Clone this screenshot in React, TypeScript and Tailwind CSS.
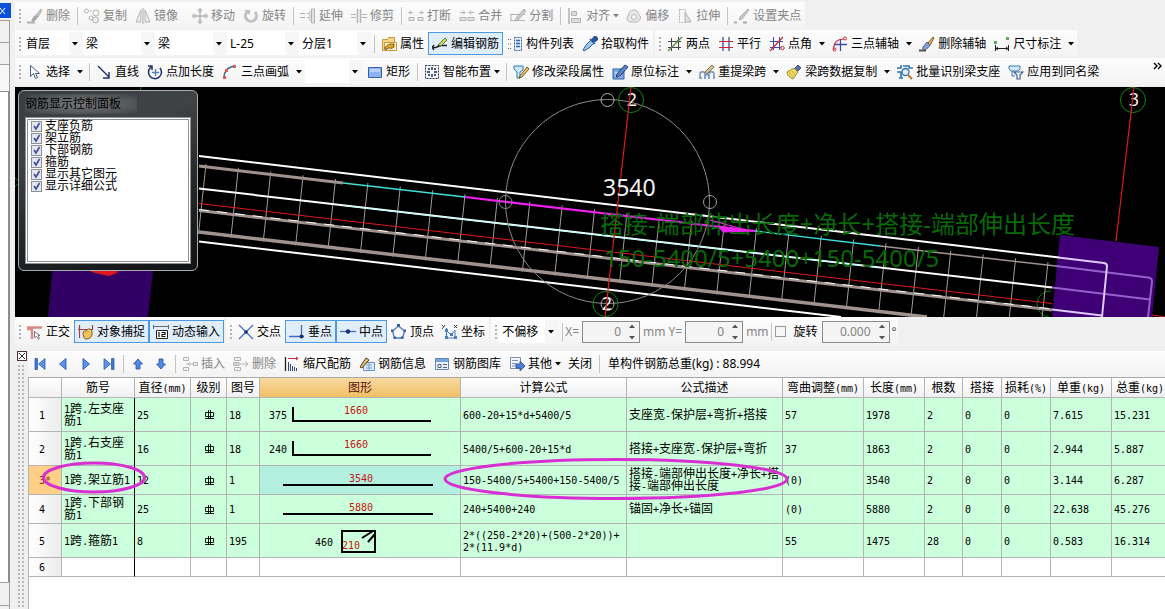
import React from 'react';

/* ---------- icons (16 x 16 grid) ---------- */

const G = '#b3b3b3';
const B = '#2f62a8';
const N = '#1c2f6b';
const R = '#c8283c';

const glyphs: Record<string, React.ReactNode> = {
  eraseGrey: (
    <>
      <path d="M14 1 9 7l2 2 4-7z" fill="#c6c6c6" stroke={G} />
      <path d="M8 7 5 11c-1 2 0 3 1 3 2-1 4-3 5-5z" fill="#a8a8a8" />
      <path d="M0 14.500h8" stroke="#b0b0b0" strokeWidth="2" />
    </>
  ),
  copy: (
    <>
      <circle cx="2.500" cy="3" r="2" stroke={G} />
      <circle cx="12" cy="5" r="3" stroke={G} />
      <circle cx="7" cy="10" r="2" stroke={G} />
      <circle cx="11.500" cy="12" r="3" stroke={G} fill="#ececec" />
      <path d="M6 3h2" stroke={G} />
    </>
  ),
  mirror: (
    <>
      <path d="M6 2v12H1zM10 2v12h5z" stroke={G} fill="#eee" />
      <path d="M8 0v16" stroke="#aaa" />
    </>
  ),
  move: (
    <path d="M8 1v14M1 8h14M6 3l2-2 2 2M6 13l2 2 2-2M3 6 1 8l2 2M13 6l2 2-2 2" stroke="#c0c0c0" strokeWidth="2" />
  ),
  rotate: (
    <>
      <path d="M4 4a5.500 5.500 0 1 0 8 0" stroke="#c0c0c0" strokeWidth="3" />
      <path d="M1 2h6v5z" fill="#c0c0c0" />
    </>
  ),
  extend: (
    <>
      <path d="M0 5.500h5M0 9.500h5M7 5.500h2M7 9.500h2" stroke={G} />
      <path d="M11.500 1h3v14h-3zM10 3v10" stroke={G} fill="#e4e4e4" />
    </>
  ),
  trim: (
    <>
      <path d="M0 6.500h5M11 6.500h5M0 9.500h5M11 9.500h5" stroke={G} />
      <path d="M6.500 1v14M9.500 1v14" stroke={G} strokeWidth="1.500" />
    </>
  ),
  breakAt: (
    <>
      <path d="M1 4.500h4M11 4.500h4M3 2.500 1 4.500l2 2M13 2.500l2 2-2 2" stroke={G} />
      <path d="M1 9.500h5v3H1zM10 9.500h5v3h-5z" stroke={G} fill="#e6e6e6" />
    </>
  ),
  merge: (
    <>
      <path d="M1 4.500h5M10 4.500h5M4 2.500l2 2-2 2M12 2.500l-2 2 2 2" stroke={G} />
      <path d="M1 9.500h6v3H1zM9 9.500h6v3H9z" stroke={G} fill="#e6e6e6" />
    </>
  ),
  split: (
    <>
      <path d="M0 6.500h15M0 12.500h15M1 6v7" stroke={G} />
      <path d="M14 1 6 10l-1 3 3-1 8-9z" fill="#c9c9c9" stroke={G} />
    </>
  ),
  align: (
    <>
      <path d="M2 0v16" stroke="#b0b0b0" strokeWidth="1.500" />
      <path d="M4.500 3.500h5v4h-5zM4.500 10.500h9v4h-9z" stroke={G} fill="#ddd" />
    </>
  ),
  offset: (
    <>
      <path d="M8 2c4 0 4 3 5 5 3 2 1 7-3 7H5c-4 0-5-4-3-6 1-3 2-6 6-6z" stroke={G} fill="#e8e8e8" />
      <circle cx="8" cy="9" r="2.500" stroke={G} fill="#fff" />
    </>
  ),
  stretch: (
    <>
      <path d="M2.500 1.500h6v13h-6z" stroke={G} strokeDasharray="2 1" />
      <path d="M8 4 14 14H8z" stroke={G} fill="#e0e0e0" />
    </>
  ),
  gripPoint: (
    <>
      <path d="M14 1 6 9l-1 3 3-1 7-9z" fill="#c9c9c9" stroke={G} />
      <path d="M0 14.500h3M9 14.500h4" stroke="#aaa" strokeWidth="2" />
    </>
  ),
  props: (
    <>
      <path d="M1.500 3.500h5l1-2h6v13h-12z" fill="#f7d58a" stroke="#c9983c" />
      <path d="M3.500 6.500h12v8h-12z" fill="#fff3cc" stroke="#c9983c" />
      <path d="M4 12c3-5 6-4 9-4v3c-2 2-4 1-6 1l-2 2z" fill="#e0a530" stroke="#5b4310" strokeWidth=".8" />
    </>
  ),
  editBar: (
    <>
      <path d="M0 11.500h4l3-2h8M2 9l-2 2.500L2 14" stroke="#222" strokeWidth="1.300" />
      <path d="m6 9 7-7 2 2-6 6z" fill="#d9d668" stroke="#5a7a35" />
      <path d="m6 9 3 1-4 2z" fill="#333" />
    </>
  ),
  list: (
    <>
      <path d="M1 3.500h4M1 8h4M1 12.500h4" stroke="#666" strokeDasharray="1 1" />
      <path d="M7.500 1.500h7v13h-7z" fill="#e9f0fb" stroke={B} strokeDasharray="2 1" />
      <path d="M9 4.500h4M9 7.500h4M9 10.500h4" stroke={B} strokeWidth="1.500" />
    </>
  ),
  dropper: (
    <>
      <path d="M9 4 4 9l-3 5 1 1 5-3 5-5z" fill="#9cc4ee" stroke={B} />
      <path d="m8 3 5 5M10 4l2-3c2-1 4 1 3 3l-3 2z" fill="#2a559c" stroke="#2a559c" strokeWidth="1.500" />
    </>
  ),
  twoPoint: (
    <>
      <path d="M4.500 2v13M11.500 1v13M1 5.500h13M1 11.500h13" stroke="#445" />
      <path d="M1 15 15 1" stroke="#5c8a3a" strokeWidth="1.200" />
      <circle cx="11" cy="5" r="1.200" fill="#3a8a3a" />
    </>
  ),
  parallel: (
    <>
      <path d="M5 1v14M11 1v14" stroke="#3c4fa0" strokeWidth="1.300" />
      <path d="M1 5.500h14M1 11.500h14" stroke={R} strokeWidth="1.200" />
    </>
  ),
  angle: (
    <>
      <path d="M4.500 1v13M10.500 1v13M1 5.500h13M1 11.500h11" stroke="#3c4fa0" />
      <path d="M1 15 14 1" stroke={R} strokeWidth="1.300" />
      <circle cx="13.500" cy="12" r="1.700" stroke={R} />
    </>
  ),
  threeAxis: (
    <>
      <path d="M8.500 3v12M3 8.500h12" stroke="#3c4fa0" strokeWidth="1.300" />
      <path d="M2 14C1 7 5 3 12 3" stroke={R} strokeWidth="1.200" />
      <circle cx="13" cy="2.500" r="1.500" stroke={R} />
      <circle cx="2.500" cy="13.500" r="1.500" stroke={R} />
    </>
  ),
  eraseAxis: (
    <>
      <path d="M14 1 9 7l2 2 4-7z" fill="#e7bb6a" stroke="#875d20" />
      <path d="M8 6 4 11c-1 2 0 3 2 3 2-1 4-3 5-5z" fill="#8c9cd2" stroke="#3a4a8c" strokeWidth=".8" />
      <path d="M0 14.500h7" stroke="#555" strokeWidth="2" />
    </>
  ),
  dimension: (
    <>
      <path d="M1.500 9v6M14.500 9v6M2 12.500h12M4 11l-2 1.500L4 14M12 11l2 1.500-2 1.500" stroke="#222" />
      <path d="M0 5h3v3H0zM12 1h3v3h-3z" fill="#58b058" />
    </>
  ),
  cursor: <path d="M3.500 1.500v11l3-3 2 5 2-1-2-4h4z" fill="#fff" stroke="#4a6088" />,
  line: <path d="m2 2 11 11M13 8v6H7" stroke={N} strokeWidth="1.400" />,
  pointLen: (
    <>
      <path d="M4 3a6.500 6.500 0 1 0 9 1M1 2l4 0 0 4" stroke={N} strokeWidth="1.500" />
      <path d="M8.500 5v7M5 8.500h7" stroke="#4a7ec4" strokeWidth="1.300" />
    </>
  ),
  arc: (
    <>
      <path d="M2 14C2 7 6 3 13 2" stroke="#3a6a8c" strokeWidth="1.400" />
      <path d="M1 12h3v3H1zM3 5h3v3H3zM11 1h3v3h-3z" fill="#e05a5c" />
    </>
  ),
  rect: (
    <>
      <path d="M1.500 3.500h13v10h-13z" fill="#8db4ee" stroke="#3460b0" />
      <path d="M3 5h10v3H3z" fill="#b7d0f7" />
    </>
  ),
  smart: (
    <>
      <path d="M1.500 1.500h13v13h-13z" stroke="#334" strokeDasharray="2 1" fill="#f3f6fb" />
      <path d="M8 3v3M8 10v3M3 8h3M10 8h3" stroke="#223" strokeWidth="1.400" />
      <path d="M4 4h2v2H4zM10 4h2v2h-2zM4 10h2v2H4zM10 10h2v2h-2z" fill="#3d5a94" />
    </>
  ),
  beamEdit: (
    <>
      <path d="M1 2h9v4L7 8v6H4V8L1 5z" fill="#cfe8fa" stroke="#2d7db8" />
      <path d="m7 12 7-9 2 2-7 8-3 1z" fill="#efc257" stroke="#54401a" strokeWidth=".8" />
    </>
  ),
  inPlace: (
    <>
      <path d="M1 5h11v10H1z" fill="#7fa9df" stroke={B} />
      <path d="M3 9h4M3 12h6" stroke="#fff" />
      <path d="m5 10 8-9 3 2-8 9-4 1z" fill="#5a86c7" stroke={N} strokeWidth=".9" />
    </>
  ),
  respan: (
    <>
      <path d="M1 14v-4c0-3 5-3 5 0v4M10 14v-4c0-3 5-3 5 0v4M6 11h4M0 14h3M5 14h2M9 14h2M14 14h2" stroke="#6a8fc0" strokeWidth="1.400" />
      <path d="m6 8 7-7 2 2-7 7z" fill="#d8c28e" stroke="#6a5a34" strokeWidth=".8" />
    </>
  ),
  spanCopy: (
    <>
      <path d="m12 1 3 3-4 4-3-3z" fill="#5570a8" stroke="#2b3d6b" strokeWidth=".8" />
      <path d="M8 4 1 8c0 3 3 6 6 7l5-7z" fill="#f0d860" stroke="#8a7418" strokeWidth=".8" />
      <path d="m3 8 4 5M6 7l3 4" stroke="#c9b440" />
    </>
  ),
  identify: (
    <>
      <path d="M0 4h4V1M12 1v3h4M0 8h4v6M6 2h5M2 14h4" stroke="#2d77b8" strokeWidth="1.600" />
      <circle cx="8.500" cy="8" r="3.500" fill="#dceefb" stroke="#3a6fa8" strokeWidth="1.300" />
      <path d="m11 11 4 4" stroke="#c07a2a" strokeWidth="2.200" />
    </>
  ),
  applySame: (
    <>
      <path d="M1 2h11v3l-2 2H3L1 5zM4 7v5h3" fill="#d5e8f9" stroke="#3a7ab8" />
      <path d="M6 8h9l-3 3v4h-3v-4z" fill="#fff" stroke="#3a6090" strokeWidth="1.200" />
    </>
  ),
  ortho: (
    <>
      <path d="M5 15V5H0M0 3.500h15" stroke="#d98a84" strokeWidth="2.400" />
      <path d="M7.500 7.500v6l2-1 2 3 1-1-1.500-3 2 0z" fill="#fff" stroke="#777" />
    </>
  ),
  snap: (
    <>
      <path d="M1.500 1v13M14.500 1v5M0 5.500h14" stroke="#a04040" strokeWidth="1.200" />
      <path d="M5 8c2-2 3 0 4-2s4-1 5 1v4c-1 3-3 4-6 4-2 0-3-3-3-7z" fill="#efc257" stroke="#80601a" />
    </>
  ),
  dynInput: (
    <>
      <path d="M0 2.500h16M.5 1v4M15.500 1v4" stroke="#667" />
      <path d="M3.500 6.500h11v8h-11z" fill="#fff" stroke="#222" />
      <path d="M6 8v5M8.500 8.500H12v2H9v2h3.500" stroke="#111" strokeWidth="1.200" />
    </>
  ),
  cross: (
    <>
      <path d="m1 1 14 14M15 1 1 15" stroke="#3f6fc0" strokeWidth="1.200" />
      <circle cx="8" cy="8" r="1.800" fill={N} />
    </>
  ),
  perp: (
    <>
      <path d="M0 12.500h15M12.500 1v12" stroke="#3f6fc0" strokeWidth="1.300" />
      <circle cx="12.500" cy="12.500" r="2" fill={N} />
    </>
  ),
  mid: (
    <>
      <path d="M0 7.500h16" stroke="#3f6fc0" strokeWidth="1.300" />
      <circle cx="8" cy="7.500" r="2.200" fill={N} />
    </>
  ),
  vertex: (
    <>
      <path d="m7.500 2 6 5-2 7h-8l-2-7z" stroke="#4a7ec4" strokeWidth="1.300" />
      <path d="M6 0h3v3H6zM0 5.500h2.500V8H0zM12.500 5.500H15V8h-2.500zM2.500 12.500H5V15H2.500zM10 12.500h2.500V15H10z" fill="#3b62a8" />
    </>
  ),
  coord: (
    <>
      <path d="M4.500 4v10H15" stroke="#4a7ec4" strokeWidth="1.200" />
      <path d="m5 7 4 4 4-5v8" stroke="#4a7ec4" />
      <path d="M0 1l1.500 1.500M3 1 0 5M12 1l3 3M15 1l-3 3" stroke="#333" />
      <path d="M3 5h3v3H3zM8 9h3v3H8zM3 12h3v3H3zM12 12h3v3h-3z" fill="#4a7ec4" />
    </>
  ),
  first: (
    <>
      <path d="M3 2.500h2.500v11H3z" fill="#3f78d8" stroke="#2450a0" strokeWidth=".7" />
      <path d="M13 2.500v11L6.500 8z" fill="#5b92ea" stroke="#2450a0" strokeWidth=".7" />
    </>
  ),
  prev: <path d="M11 2.500v11L4.500 8z" fill="#5b92ea" stroke="#2450a0" strokeWidth=".8" />,
  next: <path d="M5 2.500v11L11.500 8z" fill="#5b92ea" stroke="#2450a0" strokeWidth=".8" />,
  last: (
    <>
      <path d="M10.500 2.500H13v11h-2.500z" fill="#3f78d8" stroke="#2450a0" strokeWidth=".7" />
      <path d="M3 2.500v11L9.500 8z" fill="#5b92ea" stroke="#2450a0" strokeWidth=".7" />
    </>
  ),
  up: <path d="m8 3 4.500 5H10v5H6V8H3.500z" fill="#4f88e6" stroke="#2450a0" strokeWidth=".8" />,
  down: <path d="m8 13 4.500-5H10V3H6v5H3.500z" fill="#4f88e6" stroke="#2450a0" strokeWidth=".8" />,
  insertRow: (
    <>
      <path d="M1.500 1.500h5v3h-5zM1.500 11.500h5v3h-5zM11.500 6.500h4v3h-4z" stroke={G} fill="#f2f2f2" />
      <path d="M4 8h7M8 6 6 8l2 2" stroke={G} />
    </>
  ),
  deleteRow: (
    <>
      <path d="M1.500 1.500h6v3h-6zM1.500 11.500h6v3h-6z" stroke={G} fill="#f2f2f2" />
      <path d="M0 8h15M12 5.500 15 8l-3 2.500M0 6.500h6v3H0z" stroke={G} />
    </>
  ),
  scaleBar: (
    <>
      <path d="M1.500 1v14" stroke="#222" strokeWidth="1.300" />
      <path d="M4 2.500h10M12 1l2 1.500L12 4" stroke={R} />
      <path d="M4.500 6v9M6.500 8v7M8.500 10v5M10.500 11v4M12.500 12v3" stroke="#33476f" />
    </>
  ),
  barInfo: (
    <>
      <path d="M4.500 6.500h11v8h-11z" fill="#dce9f8" stroke="#6a92cc" />
      <path d="M7 9h6M7 12h6M10 7v7" stroke="#7fa3d4" />
      <path d="m1 11 6-9 3 2-7 8z" fill="#e5c06a" stroke="#403010" strokeWidth=".9" />
    </>
  ),
  barLib: (
    <>
      <path d="M1.500 2.500h13v11h-13z" fill="#eaf1fb" stroke="#5f86bd" />
      <path d="M2 3h12v3H2z" fill="#7ba3dc" />
      <path d="M4 8.500h3v3H4zM9 8.500h4M9 11.500h4" stroke="#55627a" />
    </>
  ),
  other: (
    <>
      <path d="M1.500 1.500h10v11h-10z" fill="#f4f7fc" stroke="#8090ac" />
      <path d="M3 4.500h6M3 7.500h4M3 10h4" stroke="#7d8fae" />
      <path d="M7 8h4V5l5 5-5 5v-3H7z" fill="#4d80d6" stroke="#234a94" strokeWidth=".8" />
    </>
  ),
};

function Icon({ name }: { name: string }) {
  return (
    <svg viewBox="0 0 16 16" className="size-4 shrink-0" fill="none" aria-hidden="true">
      {glyphs[name]}
    </svg>
  );
}

function Caret() {
  return (
    <svg viewBox="0 0 6 4" className="h-1 w-1.5 shrink-0 fill-current" aria-hidden="true">
      <path d="M0 0h6L3 3.500z" />
    </svg>
  );
}

/* ---------- toolbar parts ---------- */

type ToolProps = { icon?: string; label: string; active?: boolean; disabled?: boolean; menu?: boolean; split?: boolean };

function Tool({ icon, label, active, disabled, menu, split }: ToolProps) {
  return (
    <>
      <button
        type="button"
        disabled={disabled}
        aria-pressed={active}
        className={
          'flex h-[23px] shrink-0 items-center gap-[3px] whitespace-nowrap px-[3px] border ' +
          (active ? 'border-[#4a9ae8] bg-[#e0edfb] ' : 'border-transparent ') +
          (disabled ? 'text-[#858585]' : 'text-black')
        }
      >
        {icon && <Icon name={icon} />}
        <span>{label}</span>
        {menu && (
          <span className="flex w-[5px] justify-center">
            <Caret />
          </span>
        )}
      </button>
      {split && (
        <button type="button" aria-label={label + ' ▾'} className="flex h-[23px] w-3 shrink-0 items-center justify-center">
          <Caret />
        </button>
      )}
    </>
  );
}

function Sep({ hidden }: { hidden?: boolean }) {
  return (
    <span className="flex w-1.5 shrink-0 justify-center">
      <span className={'h-[18px] w-px ' + (hidden ? 'bg-transparent' : 'bg-[#c4c4c4]')} />
    </span>
  );
}

function Bar({ children }: { children: React.ReactNode }) {
  return (
    <div className="flex h-full shrink-0 items-center bg-linear-to-b from-[#fdfdfd] to-[#f3f3f3]">
      <svg viewBox="0 0 8 16" className="h-4 w-2 shrink-0" aria-hidden="true">
        <path d="M5 1v14" stroke="#b4b4b4" strokeWidth="2" strokeDasharray="2 2" />
      </svg>
      {children}
    </div>
  );
}

const comboWidths = { sm: 'w-[58px]', md: 'w-[60px]', lg: 'w-[72px]' };

function Combo({ label, value, size = 'lg' }: { label: string; value: string; size?: keyof typeof comboWidths }) {
  return (
    <span className={'relative flex h-[23px] shrink-0 items-center ' + comboWidths[size]}>
      <select
        aria-label={label}
        defaultValue={value}
        className="h-full w-full appearance-none border-r-[14px] border-[#f6f6f6] bg-white pl-[3px] text-black"
      >
        <option>{value}</option>
      </select>
      <span className="pointer-events-none absolute right-[5px]">
        <Caret />
      </span>
    </span>
  );
}

function Spin({ id, value, wide }: { id: string; value: string; wide?: boolean }) {
  return (
    <span className={'flex h-[22px] shrink-0 items-center border border-[#8c8c8c] bg-[#f4f4f4] ' + (wide ? 'w-[68px]' : 'w-[58px]')}>
      <input id={id} disabled defaultValue={value} className="w-full min-w-0 bg-transparent text-right text-xs text-[#858585]" />
      <svg viewBox="0 0 18 20" className="h-5 w-[18px] shrink-0 fill-[#555]" aria-hidden="true">
        <path d="m8 6 3-3.500L14 6zM8 14h6l-3 3.500z" />
      </svg>
    </span>
  );
}

/* ---------- drawing canvas ---------- */

const stirrups = Array.from({ length: 27 }, (_, i) => {
  const x = 206 + (i * 842) / 26;
  const y = 164 + (x - 206) * 0.1165;
  return { x, y };
});

function Drawing() {
  return (
    <svg
      viewBox="15 87 1150 230"
      preserveAspectRatio="xMinYMin slice"
      className="block h-[230px] w-full bg-black"
      fill="none"
      aria-label="梁钢筋三维"
    >
      <path d="M53 262h101l-6 55H48z" fill="#320064" />
      <path d="M75 265h44l-2 8-8 3-14-3z" fill="#e0141e" />
      <path d="M117 91a12.500 12.500 0 0 0 24-4M15 178l5 4-5 5" stroke="#0a780a" />
      <path d="m1060 235 99 12-7 70H1052z" fill="#3e0074" />
      <path d="M1051 291a12.500 12.500 0 0 0-2 26" stroke="#0a780a" />

      {stirrups.map((s, i) => (
        <path key={i} d={`M${s.x} ${s.y}l-7.500 70`} stroke="#a39a98" />
      ))}

      <path d="m199 156 860 101.500" stroke="#fff" strokeWidth="2" />
      <path d="m199 166 144 17" stroke="#a0928f" strokeWidth="3" />
      <path d="m343 183 122 14M755 231l125 15" stroke="#3ce0d8" strokeWidth="1.300" />
      <path d="m880 246 176 20" stroke="#a0928f" strokeWidth="1.600" />
      <path d="m465 197 290 34" stroke="#f020f0" strokeWidth="2.200" />
      <path d="m199 188.500 853 99" stroke="#fff" strokeWidth="2" />
      <path d="m343 205.500 537 62" stroke="#b4fff8" />
      <path d="m199 203.500 853 100" stroke="#e01818" />
      <path d="m199 210.500 853 99.500" stroke="#a0928f" strokeWidth="3" />
      <path d="m199 209.500 853 99.500" stroke="#fff" strokeDasharray="10 8" />
      <path d="m199 232 728 85" stroke="#a0928f" strokeWidth="3.500" />
      <path d="m199 241.500 642 75.500" stroke="#fff" strokeWidth="2" />

      <path d="m1056 266 92 11.500q4 .5 4 4l-4 36M1052 287.500l98 12" stroke="#9560cc" strokeWidth="2" />
      <path d="m1058 257.500 46 5.500q3 .5 3 3l-5 51M1052 309.500l50 6" stroke="#dccaff" strokeWidth="2" />
      <path d="m1152 315 13 2" stroke="#e01818" />

      <circle cx="607.500" cy="201.500" r="102" stroke="#8a8a8a" />
      <circle cx="607.500" cy="100" r="6.500" stroke="#b0b0b0" />
      <circle cx="505.500" cy="202" r="6.500" stroke="#8a8a8a" />
      <circle cx="710" cy="202" r="6.500" stroke="#a0a0a0" />
      <circle cx="607.500" cy="304" r="6.500" stroke="#b0b0b0" />

      <g stroke="#0a8a0a">
        <circle cx="631" cy="100" r="12.500" />
        <circle cx="605.500" cy="304" r="12.500" />
        <circle cx="1133" cy="100" r="12.500" />
      </g>
      <g fill="#f0f0f0" fontSize="18" textAnchor="middle">
        <text x="632" y="106">2</text>
        <text x="607" y="310">2</text>
        <text x="1134" y="106">3</text>
      </g>
      <path d="m631 87-26 230M1134 87l-18 154" stroke="#e01818" strokeWidth="1.200" />

      <text x="603" y="196" fontSize="23" fill="#f0f0f0">3540</text>
      <g fill="#066a06" fontSize="24">
        <text x="600" y="233">搭接-端部伸出长度+净长+搭接-端部伸出长度</text>
        <text x="604" y="267">150-5400/5+5400+150-5400/5</text>
      </g>
      <path d="m718 226 37 5-32 1zM710 220l36 10" fill="#f020f0" stroke="#f020f0" />
    </svg>
  );
}

const layers = ['支座负筋', '架立筋', '下部钢筋', '箍筋', '显示其它图元', '显示详细公式'];

function LayerPanel() {
  return (
    <section className="absolute left-[3px] top-[3px] flex h-[181px] w-[180px] flex-col rounded-md border border-[#a8acae] bg-[linear-gradient(160deg,#3a3d3f,#404345_30%,#26292b_60%,#101214)] px-1.5 pb-1.5">
      <h2 className="flex h-[26px] items-center">
        <span className="bg-[radial-gradient(ellipse,#77797b,#5c5f61_50%,transparent)] pr-4 leading-5 text-black">钢筋显示控制面板</span>
      </h2>
      <ul className="flex-1 border-[3px] border-double border-[#8f9294] bg-white px-[3px]">
        {layers.map((name) => (
          <li key={name} className="h-3">
            <label className="flex h-3 items-center gap-[3px] whitespace-nowrap leading-3 text-black">
              <span className="grid size-[11px]">
                <input
                  type="checkbox"
                  defaultChecked
                  className="peer col-start-1 row-start-1 size-[11px] appearance-none border border-[#8c8f94] bg-[#e3e6ee]"
                />
                <svg viewBox="0 0 11 11" className="pointer-events-none col-start-1 row-start-1 hidden size-[11px] peer-checked:block" fill="none">
                  <path d="m3 5 2 3 3.500-6" stroke="#3d4a9c" strokeWidth="1.600" />
                </svg>
              </span>
              {name}
            </label>
          </li>
        ))}
      </ul>
    </section>
  );
}

/* ---------- rebar table ---------- */

/* Half-width runs are set smaller so that every Latin glyph takes half a Chinese cell. */
function Half({ text }: { text: string }) {
  return (
    <>
      {text.split(/([\x20-\x7e]+)/).map((part, i) =>
        i % 2 ? (
          <span key={i} className="text-[10px] leading-[10px]">
            {part}
          </span>
        ) : (
          part
        ),
      )}
    </>
  );
}

function Shape({ side, length, kind }: { side?: string; length: string; kind: 'hook' | 'straight' | 'stirrup' }) {
  return (
    <svg viewBox="0 0 200 28" className="block h-7 w-[200px]" fill="none" stroke="#000" strokeWidth="2">
      {kind === 'hook' && <path d="M33 6v14h138" />}
      {kind === 'straight' && <path d="M23 19h150" />}
      {kind === 'stirrup' && <path d="M82 4h33v21H82zM102 11l11-7M108 15l7-8" />}
      <g stroke="none" fontSize="10">
        {side && (
          <text x={kind === 'stirrup' ? 55 : 9} y={kind === 'stirrup' ? 19 : 18} fill="#000">
            {side}
          </text>
        )}
        <text x={kind === 'stirrup' ? 82 : kind === 'hook' ? 84 : 89} y={kind === 'stirrup' ? 22 : kind === 'hook' ? 13 : 16} fill="#c81414">
          {length}
        </text>
      </g>
    </svg>
  );
}

function Grade() {
  return (
    <svg viewBox="0 0 11 11" className="mx-auto block size-[11px]" fill="none" stroke="#000" aria-label="HRB400">
      <path d="M1.500 3.500h8v4h-8zM4.500 1v9M6.500 1v9M1 9.500h9" strokeWidth=".9" />
    </svg>
  );
}

const columns = [
  { title: '', cls: 'w-[33px]' },
  { title: '筋号', cls: 'w-[73px]' },
  { title: '直径(mm)', cls: 'w-[56px]' },
  { title: '级别', cls: 'w-[36px]' },
  { title: '图号', cls: 'w-[33px]' },
  { title: '图形', cls: 'w-[201px]' },
  { title: '计算公式', cls: 'w-[166px]' },
  { title: '公式描述', cls: 'w-[156px]' },
  { title: '弯曲调整(mm)', cls: 'w-[81px]' },
  { title: '长度(mm)', cls: 'w-[61px]' },
  { title: '根数', cls: 'w-[38px]' },
  { title: '搭接', cls: 'w-[39px]' },
  { title: '损耗(%)', cls: 'w-[49px]' },
  { title: '单重(kg)', cls: 'w-[61px]' },
  { title: '总重(kg)', cls: 'w-[57px]' },
];

type Row = { h: string; name: string; dia: string; fig: string; shape: React.ReactNode; rest: string[]; current?: boolean };

const rows: Row[] = [
  {
    h: 'h-[34px]', name: '1跨.左支座\n筋1', dia: '25', fig: '18',
    shape: <Shape kind="hook" side="375" length="1660" />,
    rest: ['600-20+15*d+5400/5', '支座宽-保护层+弯折+搭接', '57', '1978', '2', '0', '0', '7.615', '15.231'],
  },
  {
    h: 'h-[34px]', name: '1跨.右支座\n筋1', dia: '16', fig: '18',
    shape: <Shape kind="hook" side="240" length="1660" />,
    rest: ['5400/5+600-20+15*d', '搭接+支座宽-保护层+弯折', '37', '1863', '2', '0', '0', '2.944', '5.887'],
  },
  {
    h: 'h-[29px]', name: '1跨.架立筋1', dia: '12', fig: '1', current: true,
    shape: <Shape kind="straight" length="3540" />,
    rest: ['150-5400/5+5400+150-5400/5', '搭接-端部伸出长度+净长+搭\n接-端部伸出长度', '(0)', '3540', '2', '0', '0', '3.144', '6.287'],
  },
  {
    h: 'h-[29px]', name: '1跨.下部钢\n筋1', dia: '25', fig: '1',
    shape: <Shape kind="straight" length="5880" />,
    rest: ['240+5400+240', '锚固+净长+锚固', '(0)', '5880', '2', '0', '0', '22.638', '45.276'],
  },
  {
    h: 'h-[34px]', name: '1跨.箍筋1', dia: '8', fig: '195',
    shape: <Shape kind="stirrup" side="460" length="210" />,
    rest: ['2*((250-2*20)+(500-2*20))+\n2*(11.9*d)', '', '55', '1475', '28', '0', '0', '0.583', '16.314'],
  },
];

const line = 'border-b border-r border-[#b4b4b4] p-0 ';
const cell = line + 'bg-[#ccffdb] pl-[2px] whitespace-pre ';
const nameCell = 'border-b border-r border-b-[#b4b4b4] border-r-black p-0 pl-[2px] whitespace-pre ';
const rowHead = line + 'pl-[10px] text-left font-normal ';

function RebarTable() {
  return (
    <div className="relative min-w-0 flex-1 overflow-hidden border-l border-[#b4b4b4] bg-white">
      <table className="w-[1140px] table-fixed border-separate border-spacing-0 leading-3 text-black [font-family:'DejaVu_Sans_Mono','Noto_Sans_CJK_SC',monospace]">
        <thead>
          <tr className="h-5">
            {columns.map((c, i) => (
              <th
                key={i}
                scope="col"
                className={
                  line + c.cls + ' whitespace-nowrap font-normal ' +
                  (c.title === '图形' ? 'bg-linear-to-b from-[#f8d9a0] to-[#f0bf62] text-[#5c1010]' : 'bg-linear-to-b from-white to-[#f0f0f0]')
                }
              >
                <Half text={c.title} />
              </th>
            ))}
          </tr>
        </thead>
        <tbody>
          {rows.map((r, i) => (
            <tr key={i} className={r.h}>
              <th scope="row" className={rowHead + (r.current ? 'bg-[#ffcf87] text-[#8a3010]' : 'bg-linear-to-r from-white to-[#ececec]')}>
                <Half text={i + 1 + (r.current ? '*' : '')} />
              </th>
              <td className={nameCell + 'bg-[#ccffdb]'}><Half text={r.name} /></td>
              <td className={cell}><Half text={r.dia} /></td>
              <td className={cell}><Grade /></td>
              <td className={cell}><Half text={r.fig} /></td>
              <td className={line + (r.current ? 'bg-[#b4f0e0]' : 'bg-[#ccffdb]')}>{r.shape}</td>
              {r.rest.map((v, j) => (
                <td key={j} className={cell}><Half text={v} /></td>
              ))}
            </tr>
          ))}
          <tr className="h-[19px]">
            <th scope="row" className={rowHead + 'bg-linear-to-r from-white to-[#ececec]'}>
              <Half text="6" />
            </th>
            <td className={nameCell} />
            {columns.slice(2).map((c) => (
              <td key={c.title} className={line} />
            ))}
          </tr>
        </tbody>
      </table>
      <svg viewBox="0 0 780 140" className="pointer-events-none absolute left-0 top-0 h-[140px] w-[780px]" fill="none" stroke="#d92fd2" strokeWidth="3" aria-hidden="true">
        <ellipse cx="65" cy="99.500" rx="50.500" ry="14.500" />
        <ellipse cx="587" cy="101" rx="171" ry="19.500" />
      </svg>
    </div>
  );
}

/* ---------- page ---------- */

export default function App() {
  return (
    <div className="flex min-h-screen overflow-hidden bg-[#f0f0f0] text-xs leading-4 text-black [font-family:'Noto_Sans','Noto_Sans_CJK_SC',sans-serif]">
      <aside className="flex w-[15px] shrink-0 flex-col pt-[3px]">
        <button type="button" aria-label="关闭" className="flex h-[15px] w-[11px] items-center bg-[#0c50d8]">
          <svg viewBox="0 0 8 8" className="size-2" stroke="#fff" fill="none"><path d="M0 1l5 6M5 1 0 7" /></svg>
        </button>
        <div className="mt-0.5 h-[22px] w-2.5 border-r border-t border-[#a0a0a0]" />
        <div className="h-[22px] w-2.5 border-r border-t border-[#a0a0a0]" />
        <div className="h-[27px] w-2.5 border-r border-t border-[#a0a0a0] bg-[#f7f7f7]" />
        <div className="w-2.5 flex-1 border-r-2 border-t border-[#8c8c8c] bg-white" />
        <div className="h-[23px] w-2.5 border-r border-t border-[#a0a0a0]" />
        <div className="h-1 w-2.5 border-r border-t border-[#a0a0a0]" />
      </aside>

      <main className="flex min-w-0 flex-1 flex-col">
        <div className="flex flex-col gap-px py-0.5">
          <div className="flex h-[27px]">
            <Bar>
              <Tool icon="eraseGrey" label="删除" disabled />
              <Sep />
              <Tool icon="copy" label="复制" disabled />
              <Tool icon="mirror" label="镜像" disabled />
              <Sep hidden />
              <Tool icon="move" label="移动" disabled />
              <Tool icon="rotate" label="旋转" disabled />
              <Sep />
              <Tool icon="extend" label="延伸" disabled />
              <Tool icon="trim" label="修剪" disabled />
              <Sep />
              <Tool icon="breakAt" label="打断" disabled />
              <Tool icon="merge" label="合并" disabled />
              <Tool icon="split" label="分割" disabled />
              <Sep />
              <Tool icon="align" label="对齐" disabled menu />
              <Tool icon="offset" label="偏移" disabled />
              <Tool icon="stretch" label="拉伸" disabled />
              <Sep />
              <Tool icon="gripPoint" label="设置夹点" disabled />
            </Bar>
          </div>

          <div className="flex h-[27px] gap-0.5">
            <Bar>
              <Combo label="楼层" value="首层" size="md" />
              <Combo label="构件类别" value="梁" />
              <Combo label="构件类型" value="梁" />
              <Combo label="构件名称" value="L-25" />
              <Combo label="分层" value="分层1" />
              <Sep />
              <Tool icon="props" label="属性" />
              <Tool icon="editBar" label="编辑钢筋" active />
              <Tool icon="list" label="构件列表" />
              <Tool icon="dropper" label="拾取构件" />
            </Bar>
            <Bar>
              <Tool icon="twoPoint" label="两点" />
              <Tool icon="parallel" label="平行" />
              <Tool icon="angle" label="点角" split />
              <Tool icon="threeAxis" label="三点辅轴" split />
              <Tool icon="eraseAxis" label="删除辅轴" />
              <Tool icon="dimension" label="尺寸标注" split />
            </Bar>
          </div>

          <div className="flex h-[27px] bg-linear-to-b from-[#fdfdfd] to-[#f3f3f3]">
            <Bar>
              <Tool icon="cursor" label="选择" split />
              <Sep />
              <Tool icon="line" label="直线" />
              <Tool icon="pointLen" label="点加长度" />
              <Tool icon="arc" label="三点画弧" split />
              <Combo label="画弧方式" value="" size="sm" />
              <Tool icon="rect" label="矩形" />
              <Sep />
              <Tool icon="smart" label="智能布置" menu />
              <Sep />
              <Tool icon="beamEdit" label="修改梁段属性" />
              <Tool icon="inPlace" label="原位标注" split />
              <Tool icon="respan" label="重提梁跨" split />
              <Tool icon="spanCopy" label="梁跨数据复制" split />
              <Tool icon="identify" label="批量识别梁支座" />
              <Tool icon="applySame" label="应用到同名梁" />
            </Bar>
            <button type="button" aria-label="更多" className="ml-auto flex h-4 w-3 items-center">
              <svg viewBox="0 0 10 8" className="h-2 w-2.5" fill="none" stroke="#000" strokeWidth="1.400"><path d="m1 1 3 3-3 3M5 1l3 3-3 3" /></svg>
            </button>
          </div>
        </div>

        <div className="relative">
          <Drawing />
          <LayerPanel />
        </div>

        <div className="mb-[5px] flex h-[29px] gap-0.5">
          <Bar>
            <Tool icon="ortho" label="正交" />
            <Tool icon="snap" label="对象捕捉" active />
            <Tool icon="dynInput" label="动态输入" active />
          </Bar>
          <Bar>
            <Tool icon="cross" label="交点" />
            <Tool icon="perp" label="垂点" active />
            <Tool icon="mid" label="中点" active />
            <Tool icon="vertex" label="顶点" />
            <Tool icon="coord" label="坐标" />
          </Bar>
          <Bar>
            <Combo label="偏移方式" value="不偏移" size="md" />
            <Sep />
            <div className="flex items-center gap-[3px] text-[#858585]">
              <label htmlFor="dx">X=</label>
              <Spin id="dx" value="0" />
              <span>mm</span>
              <label htmlFor="dy">Y=</label>
              <Spin id="dy" value="0" />
              <span>mm</span>
            </div>
            <Sep />
            <input id="rot" type="checkbox" className="size-[11px] shrink-0 appearance-none border border-[#9a9a9a] bg-[#f6f6f6]" />
            <label htmlFor="rot" className="px-1 pl-2">旋转</label>
            <Spin id="angle" value="0.000" wide />
            <label htmlFor="angle" className="w-2 pl-0.5 text-[#555]">°</label>
          </Bar>
        </div>

        <div className="flex flex-1">
          <div className="flex w-[13px] shrink-0 flex-col items-center">
            <button type="button" aria-label="关闭面板" className="size-[10px] border border-[#5a3038] bg-white">
              <svg viewBox="0 0 8 8" className="size-2" stroke="#3a2026" fill="none"><path d="m1 1 6 6M7 1 1 7" /></svg>
            </button>
            <div className="mt-1 w-2 flex-1 bg-[radial-gradient(circle_at_1px_1px,#b8b8b8_1px,transparent_1px)] bg-[size:4px_4px]" />
          </div>
          <div className="flex min-w-0 flex-1 flex-col">
            <div className="flex h-[27px] items-center border-b border-[#a8a8a8] bg-linear-to-b from-[#fdfdfd] to-[#f3f3f3]">
              {[
                ['first', '首条'],
                ['prev', '上一条'],
                ['next', '下一条'],
                ['last', '末条'],
              ].map(([icon, name]) => (
                <button key={icon} type="button" aria-label={name} className="flex w-[23px] shrink-0 justify-center">
                  <Icon name={icon} />
                </button>
              ))}
              <Sep />
              <button type="button" aria-label="上移" className="flex w-[23px] shrink-0 justify-center"><Icon name="up" /></button>
              <button type="button" aria-label="下移" className="flex w-[23px] shrink-0 justify-center"><Icon name="down" /></button>
              <Sep />
              <Tool icon="insertRow" label="插入" disabled />
              <Tool icon="deleteRow" label="删除" disabled />
              <Tool icon="scaleBar" label="缩尺配筋" />
              <Tool icon="barInfo" label="钢筋信息" />
              <Tool icon="barLib" label="钢筋图库" />
              <Tool icon="other" label="其他" menu />
              <Tool label="关闭" />
              <Sep />
              <span className="whitespace-nowrap px-1.5">单构件钢筋总重(kg) : 88.994</span>
            </div>
            <RebarTable />
          </div>
        </div>
      </main>
    </div>
  );
}
